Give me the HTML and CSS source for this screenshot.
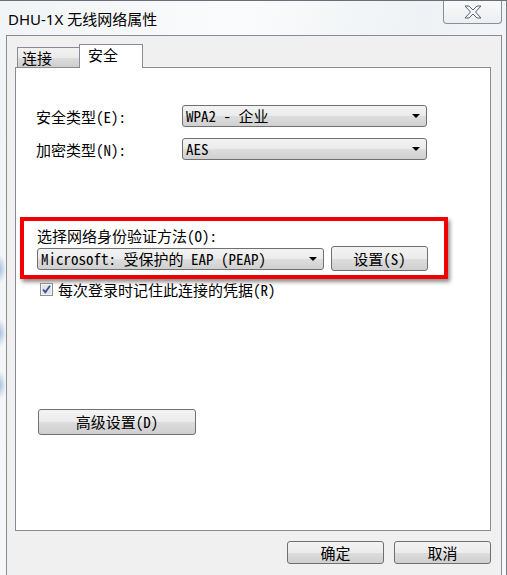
FILE: index.html
```html
<!doctype html>
<html lang="zh-CN">
    <head>
        <meta charset="UTF-8" />
        <title>DHU-1X 无线网络属性</title>
        <link rel="stylesheet" href="styles.css">
    </head>
    <body>
        <div class="window">
            <div class="titlebar">
                <div class="caption">DHU-1X 无线网络属性</div>
                <div class="close">
                    <svg width="18" height="14" viewBox="0 0 18 14">
                        <polygon points="1,1 5,1 9,5 13,1 17,1 11.5,7 17,13 13,13 9,9 5,13 1,13 6.5,7" fill="#f4f5f7" stroke="#5b606c" stroke-width="1" stroke-linejoin="round" />
                    </svg>
                </div>
            </div>

            <div class="frame">
                <div class="tabs">
                    <div class="tab">连接</div>
                    <div class="tab active">安全</div>
                </div>

                <div class="page">
                    <div class="fields">
                        <div class="label">安全类型(E):</div>
                        <div class="combo">WPA2 - 企业<span class="arrow"></span></div>
                        <div class="label">加密类型(N):</div>
                        <div class="combo">AES<span class="arrow"></span></div>
                    </div>

                    <div class="highlight">
                        <div class="label">选择网络身份验证方法(O):</div>
                        <div class="auth-row">
                            <div class="combo auth">Microsoft: 受保护的 EAP (PEAP)<span class="arrow"></span></div>
                            <div class="btn settings">设置(S)</div>
                        </div>
                    </div>

                    <div class="check-row">
                        <span class="checkbox">
                            <svg width="13" height="13" viewBox="0 0 13 13">
                                <rect x="0.5" y="0.5" width="12" height="12" fill="#f4f4f4" stroke="#8e8f8f" />
                                <rect x="2" y="2" width="9" height="9" fill="#dfe3ea" />
                                <path d="M3 6.5 L5.3 9.2 L10 2.8" fill="none" stroke="#3b4f8c" stroke-width="1.8" />
                            </svg>
                        </span>
                        每次登录时记住此连接的凭据(R)
                    </div>

                    <div class="btn advanced">高级设置(D)</div>
                </div>

                <div class="footer">
                    <div class="btn ui">确定</div>
                    <div class="btn ui">取消</div>
                </div>
            </div>
        </div>
    </body>
</html>
```

FILE: styles.css
```css
body {
    margin: 0;
    background: #eef2f4;
    color: #000;
}
.window {
    width: 506px;
    height: 574px;
    border-top: 1px solid #6b6e75;
    border-right: 1px solid #7a7d84;
    background:
        radial-gradient(ellipse 6px 14px at 0 268px, rgba(120, 160, 200, 0.6), transparent),
        radial-gradient(ellipse 6px 14px at 0 332px, rgba(120, 160, 200, 0.6), transparent),
        radial-gradient(ellipse 6px 14px at 0 384px, rgba(120, 160, 200, 0.6), transparent),
        linear-gradient(100deg, #f1f4f6 0%, #fafbfc 40%, #eef2f4 70%, #f6f8f9 100%);
}
.titlebar {
    height: 34px;
    display: flex;
    justify-content: space-between;
    align-items: flex-start;
}
.caption {
    font-family: "Noto Sans", "Noto Sans CJK SC", sans-serif;
    font-size: 15px;
    line-height: 20px;
    padding: 8px 0 0 8px;
    color: #000;
}
.close {
    width: 57px;
    height: 22px;
    margin-right: 4px;
    border: 1px solid #8b8e95;
    border-top: none;
    border-radius: 0 0 4px 4px;
    background: linear-gradient(#f8f9fa, #eceff2);
    display: flex;
    justify-content: center;
    align-items: center;
}
.frame {
    width: 476px;
    height: 537px;
    margin-left: 6px;
    border: 1px solid #8a8c92;
    background: #f0f0f0;
    padding: 8px 10px 0 8px;
}
.tabs {
    display: flex;
    align-items: flex-end;
    height: 23px;
    margin-left: 2px;
}
.tab {
    font-family: "Noto Sans CJK SC", sans-serif;
    font-size: 15px;
    line-height: 19px;
    height: 19px;
    width: 57px;
    padding-left: 4px;
    border: 1px solid #898c95;
    border-bottom: none;
    border-right: none;
    background: linear-gradient(#f2f2f2 0%, #ebebeb 50%, #dddddd 51%, #cfcfcf 100%);
}
.tab.active {
    position: relative;
    z-index: 1;
    width: 54px;
    height: 23px;
    padding-left: 8px;
    line-height: 20px;
    margin-bottom: -1px;
    border-right: 1px solid #898c95;
    background: #fff;
}
.page {
    height: 462px;
    border: 1px solid #898c95;
    background: #fff;
    font-family: "Noto Sans Mono CJK SC", "Noto Sans CJK SC", monospace;
    font-size: 15px;
}
.fields {
    display: grid;
    grid-template-columns: 146px 245px;
    grid-auto-rows: 22px;
    row-gap: 11px;
    align-items: center;
    padding: 37px 0 0 20px;
}
.label {
    line-height: 17px;
}
.combo {
    position: relative;
    height: 20px;
    line-height: 20px;
    padding-left: 3px;
    border: 1px solid #707070;
    border-radius: 3px;
    background: linear-gradient(#f3f3f3 0%, #ebebeb 50%, #dddddd 51%, #d0d0d0 100%);
    white-space: nowrap;
}
.arrow {
    position: absolute;
    right: 6px;
    top: 8px;
    border-left: 4px solid transparent;
    border-right: 4px solid transparent;
    border-top: 4px solid #000;
}
.highlight {
    width: 407px;
    margin: 57px 0 0 4px;
    padding: 6px 0 4px 13px;
    border: 4px solid #f00000;
    box-shadow: 2px 3px 4px rgba(0, 0, 0, 0.45);
}
.auth-row {
    display: flex;
    align-items: center;
    gap: 7px;
    margin-top: 2px;
}
.combo.auth {
    width: 282px;
}
.btn {
    height: 23px;
    line-height: 23px;
    text-align: center;
    border: 1px solid #707070;
    border-radius: 3px;
    background: linear-gradient(#f3f3f3 0%, #ebebeb 50%, #dddddd 51%, #cfcfcf 100%);
}
.btn.settings {
    width: 95px;
}
.check-row {
    display: flex;
    align-items: center;
    gap: 5px;
    margin: 2px 0 0 24px;
    line-height: 17px;
}
.checkbox {
    display: flex;
}
.btn.advanced {
    width: 156px;
    height: 24px;
    line-height: 24px;
    margin: 111px 0 0 22px;
}
.footer {
    display: flex;
    justify-content: flex-end;
    gap: 10px;
    margin-top: 10px;
}
.btn.ui {
    width: 95px;
    height: 21px;
    line-height: 21px;
    font-family: "Noto Sans CJK SC", sans-serif;
    font-size: 15px;
}
```
